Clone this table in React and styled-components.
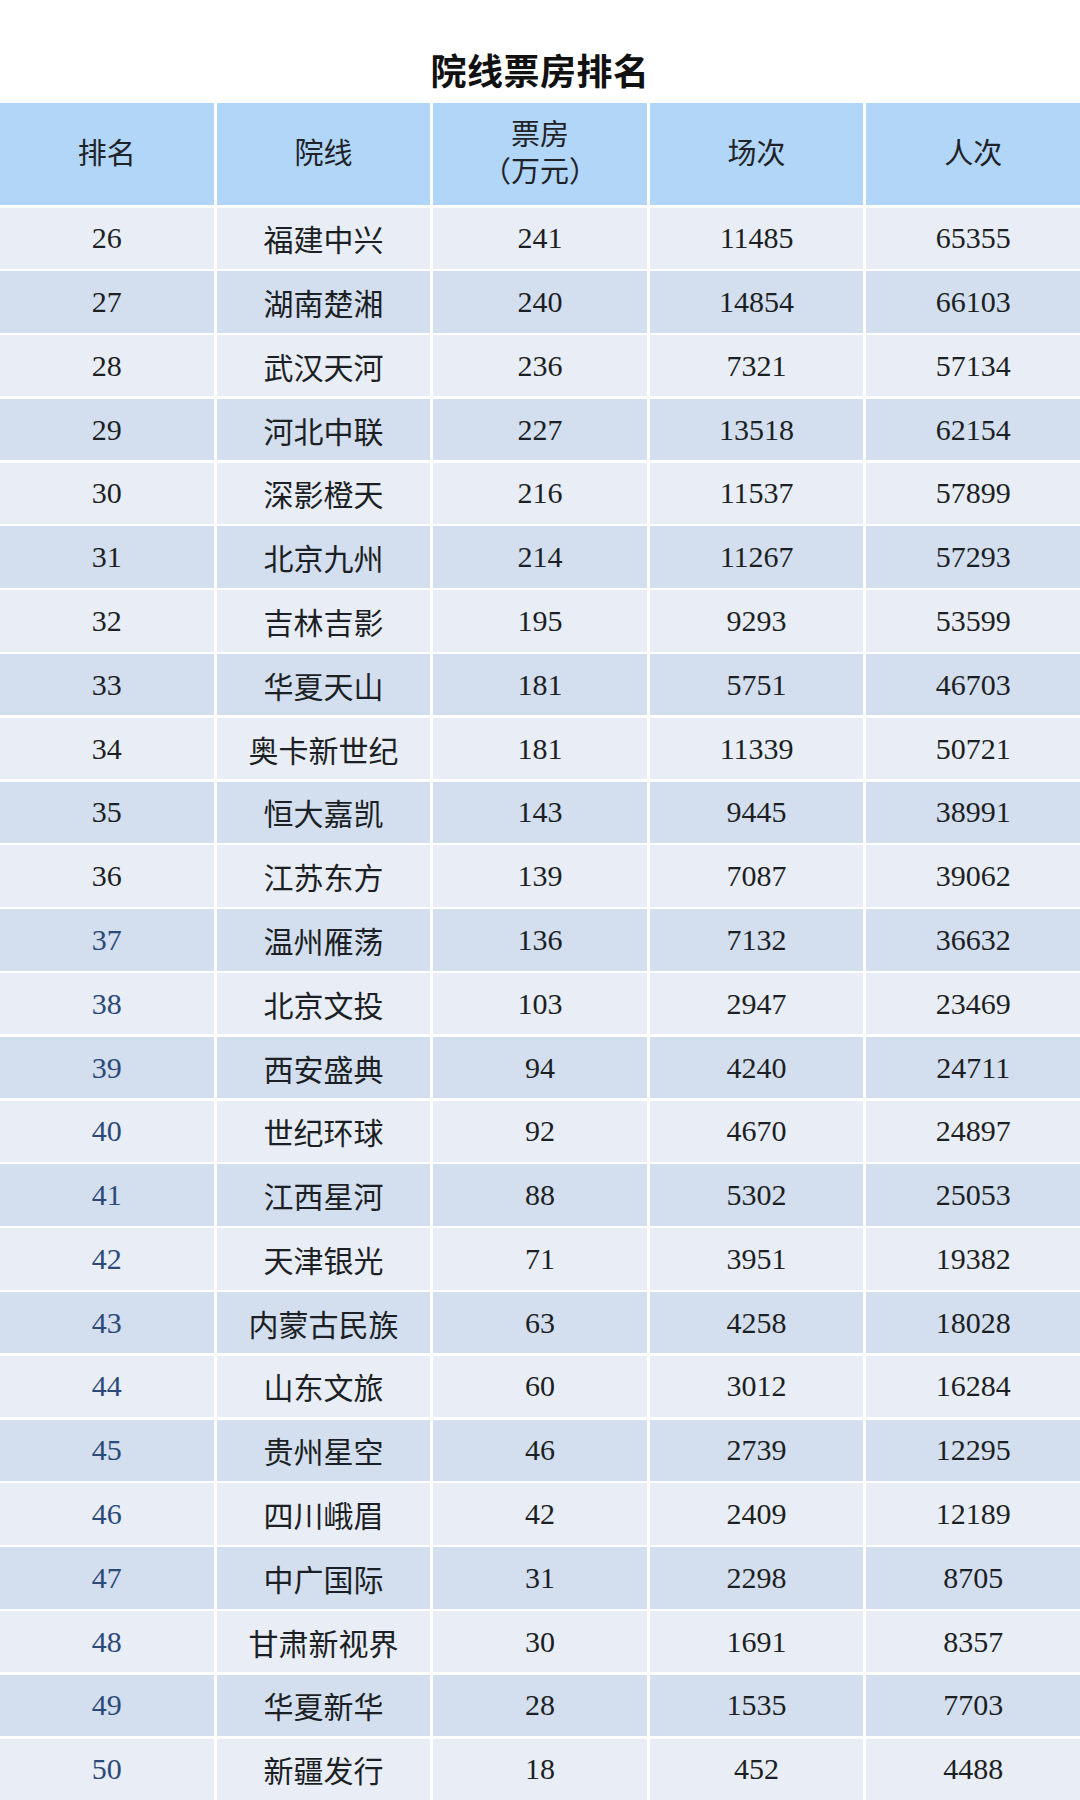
import React from "react";
import styled, { createGlobalStyle } from "styled-components";

const GlobalStyle = createGlobalStyle`
  html, body { margin: 0; padding: 0; background: #ffffff; }
  body { font-family: "Liberation Serif", "Noto Sans CJK SC", serif; }
`;

const Page = styled.div`
  width: 1080px;
  background: #ffffff;
`;

const Title = styled.h1`
  margin: 0;
  height: 103px;
  box-sizing: border-box;
  padding-top: 44px;
  text-align: center;
  font-family: "Noto Sans CJK SC", "Noto Sans", sans-serif;
  font-weight: 700;
  font-size: 36px;
  line-height: 50px;
  color: #111111;
  letter-spacing: 0.5px;
`;

const Table = styled.div`
  display: grid;
  grid-template-columns: repeat(5, 1fr);
  column-gap: 3px;
  row-gap: 2.5px;
  width: 1080px;
`;

const HeadCell = styled.div`
  height: 102px;
  background: #b2d6f8;
  display: flex;
  flex-direction: column;
  align-items: center;
  justify-content: center;
  font-family: "Liberation Serif", "Noto Sans CJK SC", serif;
  font-size: 29px;
  line-height: 37px;
  color: #1f2329;
`;

const Cell = styled.div`
  height: 61.3px;
  background: ${(p) => (p.$alt ? "#d3deee" : "#e9edf6")};
  display: flex;
  align-items: center;
  justify-content: center;
  font-family: "Liberation Serif", "Noto Sans CJK SC", serif;
  font-size: 30px;
  color: ${(p) => (p.$blue ? "#2b4a78" : "#1c1f24")};
`;

const rows = [
  [26, "福建中兴", 241, 11485, 65355],
  [27, "湖南楚湘", 240, 14854, 66103],
  [28, "武汉天河", 236, 7321, 57134],
  [29, "河北中联", 227, 13518, 62154],
  [30, "深影橙天", 216, 11537, 57899],
  [31, "北京九州", 214, 11267, 57293],
  [32, "吉林吉影", 195, 9293, 53599],
  [33, "华夏天山", 181, 5751, 46703],
  [34, "奥卡新世纪", 181, 11339, 50721],
  [35, "恒大嘉凯", 143, 9445, 38991],
  [36, "江苏东方", 139, 7087, 39062],
  [37, "温州雁荡", 136, 7132, 36632],
  [38, "北京文投", 103, 2947, 23469],
  [39, "西安盛典", 94, 4240, 24711],
  [40, "世纪环球", 92, 4670, 24897],
  [41, "江西星河", 88, 5302, 25053],
  [42, "天津银光", 71, 3951, 19382],
  [43, "内蒙古民族", 63, 4258, 18028],
  [44, "山东文旅", 60, 3012, 16284],
  [45, "贵州星空", 46, 2739, 12295],
  [46, "四川峨眉", 42, 2409, 12189],
  [47, "中广国际", 31, 2298, 8705],
  [48, "甘肃新视界", 30, 1691, 8357],
  [49, "华夏新华", 28, 1535, 7703],
  [50, "新疆发行", 18, 452, 4488],
];

export default function App() {
  return (
    <Page>
      <GlobalStyle />
      <Title>院线票房排名</Title>
      <Table>
        <HeadCell>排名</HeadCell>
        <HeadCell>院线</HeadCell>
        <HeadCell>
          <span>票房</span>
          <span>（万元）</span>
        </HeadCell>
        <HeadCell>场次</HeadCell>
        <HeadCell>人次</HeadCell>
        {rows.map((r, i) =>
          r.map((v, j) => (
            <Cell key={`${i}-${j}`} $alt={i % 2 === 1} $blue={j === 0 && r[0] >= 37}>
              {v}
            </Cell>
          ))
        )}
      </Table>
    </Page>
  );
}
